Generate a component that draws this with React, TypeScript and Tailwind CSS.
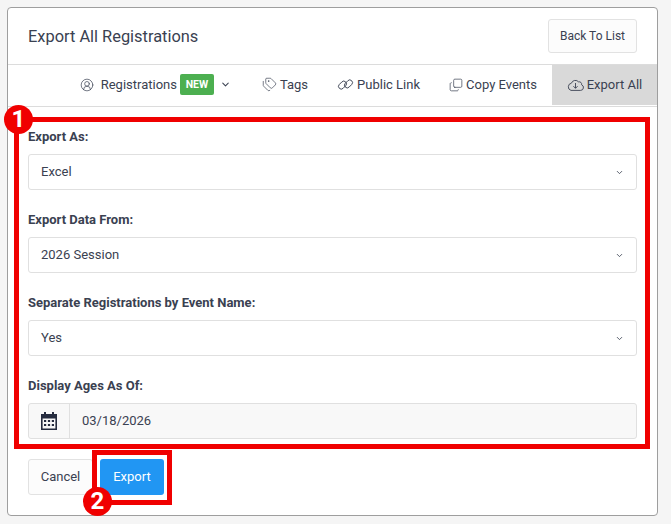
import React from 'react';
import { ChevronDown, CircleUserRound, Tags, Copy } from 'lucide-react';

const selects = [
  { label: 'Export As:', value: 'Excel' },
  { label: 'Export Data From:', value: '2026 Session' },
  { label: 'Separate Registrations by Event Name:', value: 'Yes' },
];

const Badge = ({ n, className }: { n: string; className: string }) => (
  <div className={`absolute w-[29px] h-[29px] rounded-full bg-[#f00000] text-white font-bold text-[24px] leading-[29px] text-center ${className}`}>
    {n}
  </div>
);

const LinkIcon = () => (
  <svg width="17" height="13" viewBox="0 0 17 13" fill="none" stroke="currentColor" strokeWidth="0.9" className="mr-[3px]">
    <rect x="1" y="4.4" width="9" height="5.4" rx="2.7" transform="rotate(-45 5.5 7.1)" />
    <rect x="7" y="3.2" width="9" height="5.4" rx="2.7" transform="rotate(-45 11.5 5.9)" />
  </svg>
);

const CloudIcon = () => (
  <svg width="17" height="13" viewBox="0 0 17 13" fill="none" stroke="currentColor" strokeWidth="0.9" className="mr-[3px]">
    <path d="M4 12.4h9.6a2.9 2.9 0 0 0 1-5.6 2.4 2.4 0 0 0-3-2.9A4.2 4.2 0 0 0 4.4 5.2 3.7 3.7 0 0 0 4 12.4z" />
    <path d="M8.5 5v5.2M6.4 8.2l2.1 2.1 2.1-2.1" />
  </svg>
);

const CalendarIcon = () => (
  <svg width="16" height="18" viewBox="0 0 16 18" className="text-[#262c3f]">
    <path fill="currentColor" fillRule="evenodd" d="M3 0h2v2h6V0h2v2h3v16H0V2h3zM1.6 6.5V16.4h12.8V6.5z" />
    <g fill="currentColor">
      <rect x="3" y="8" width="2.2" height="2" />
      <rect x="6.9" y="8" width="2.2" height="2" />
      <rect x="10.8" y="8" width="2.2" height="2" />
      <rect x="3" y="12" width="2.2" height="2" />
      <rect x="6.9" y="12" width="2.2" height="2" />
      <rect x="10.8" y="12" width="2.2" height="2" />
    </g>
  </svg>
);

const App: React.FC = () => {
  return (
    <div className="relative w-[671px] h-[524px] overflow-hidden bg-[#f5f5f5] pt-[7px] pl-[7px] text-[#3a4151] font-['Roboto',sans-serif]">
      {/* Card */}
      <div className="w-[651px] h-[509px] bg-white border border-[#9e9e9e] rounded-[4px]">
        <div className="h-[57px] flex items-center justify-between pl-[20px] pr-[20px] border-b border-[#dcdcdc]">
          <h1 className="text-[16.4px] font-normal pt-[2px]">Export All Registrations</h1>
          <button className="h-[34px] w-[89px] text-[12px] bg-[#fcfcfc] border border-[#e2e2e2] rounded-[3px]">Back To List</button>
        </div>

        {/* Tabs */}
        <div className="h-[42px] flex items-stretch justify-end border-b border-[#dcdcdc] text-[13px]">
          <div className="flex items-center pb-[2px]">
            <CircleUserRound size={14} strokeWidth={1.2} className="mr-[7px]" />
            <span>Registrations</span>
            <span className="ml-[3px] w-[34px] h-[21px] rounded-[2px] bg-[#4caf50] text-white text-[10.5px] font-bold flex items-center justify-center">NEW</span>
            <ChevronDown size={11} strokeWidth={2.2} className="ml-[6px] mr-[31px]" />
          </div>
          <div className="flex items-center pb-[2px] mr-[29px]">
            <Tags size={15} strokeWidth={1.1} className="mr-[3px]" />
            <span>Tags</span>
          </div>
          <div className="flex items-center pb-[2px] mr-[29px]">
            <LinkIcon />
            <span>Public Link</span>
          </div>
          <div className="flex items-center pb-[2px] mr-[15px]">
            <Copy size={14} strokeWidth={1.2} className="mr-[3px] -scale-y-100" />
            <span>Copy Events</span>
          </div>
          <div className="w-[105px] mb-[1px] pb-[1px] bg-[#d9d9d9] flex items-center justify-center">
            <CloudIcon />
            <span>Export All</span>
          </div>
        </div>

        {/* Form */}
        <div className="pt-[20px] pl-[20px] w-[629px]">
          {selects.map((s) => (
            <div key={s.label} className="mb-[20px]">
              <div className="h-[19px] mb-[8px] text-[13px] leading-[19px] font-bold">{s.label}</div>
              <div className="h-[36px] pl-[12px] pr-[12px] flex items-center justify-between border border-[#e0e0e0] rounded-[3px] text-[13px]">
                <span>{s.value}</span>
                <ChevronDown size={9} strokeWidth={2.2} />
              </div>
            </div>
          ))}
          <div className="h-[19px] mb-[8px] text-[13px] leading-[19px] font-bold">Display Ages As Of:</div>
          <div className="h-[36px] flex items-center border border-[#e0e0e0] rounded-[3px] bg-[#f8f8f8] text-[13px]">
            <div className="w-[41px] h-full flex items-center justify-center border-r border-[#e0e0e0]">
              <CalendarIcon />
            </div>
            <span className="ml-[12px]">03/18/2026</span>
          </div>
          <div className="mt-[20px] flex gap-[7px] text-[13px]">
            <button className="w-[65px] h-[36px] bg-[#fcfcfc] border border-[#e2e2e2] rounded-[3px]">Cancel</button>
            <button className="w-[64px] h-[36px] bg-[#2196f3] text-white rounded-[3px]">Export</button>
          </div>
        </div>
      </div>

      {/* Annotations */}
      <div className="absolute left-[14px] top-[117px] w-[636px] h-[332px] border-[5px] border-[#f00000]" />
      <div className="absolute left-[92px] top-[450px] w-[80px] h-[55px] border-[5px] border-[#f00000]" />
      <Badge n="1" className="left-[4px] top-[105px]" />
      <Badge n="2" className="left-[83px] top-[487px]" />
    </div>
  );
};

export default App;
